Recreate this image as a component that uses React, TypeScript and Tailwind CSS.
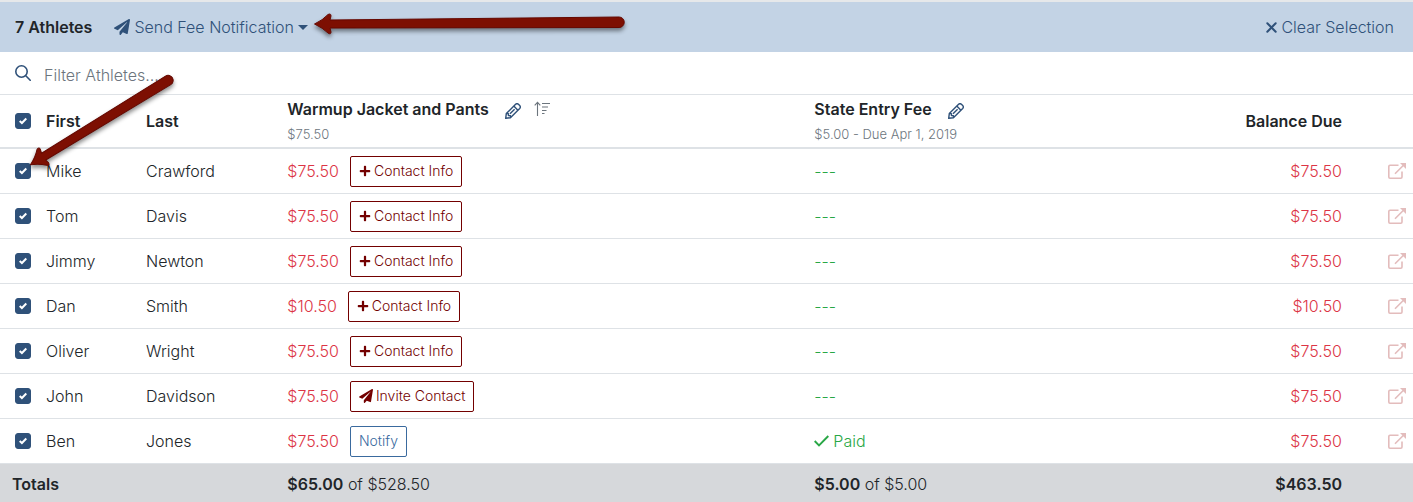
import { useState } from "react";
import { FaPaperPlane, FaPlus } from "react-icons/fa";

type ContactAction = "add" | "invite" | "notify";

interface Athlete {
  first: string;
  last: string;
  jacket: string;
  action: ContactAction;
  entryPaid: boolean;
  balance: string;
}

const ATHLETES: Athlete[] = [
  { first: "Mike", last: "Crawford", jacket: "$75.50", action: "add", entryPaid: false, balance: "$75.50" },
  { first: "Tom", last: "Davis", jacket: "$75.50", action: "add", entryPaid: false, balance: "$75.50" },
  { first: "Jimmy", last: "Newton", jacket: "$75.50", action: "add", entryPaid: false, balance: "$75.50" },
  { first: "Dan", last: "Smith", jacket: "$10.50", action: "add", entryPaid: false, balance: "$10.50" },
  { first: "Oliver", last: "Wright", jacket: "$75.50", action: "add", entryPaid: false, balance: "$75.50" },
  { first: "John", last: "Davidson", jacket: "$75.50", action: "invite", entryPaid: false, balance: "$75.50" },
  { first: "Ben", last: "Jones", jacket: "$75.50", action: "notify", entryPaid: true, balance: "$75.50" },
];

function SearchIcon() {
  return (
    <svg className="size-4 shrink-0 text-[#2f5179]" viewBox="0 0 16 16" fill="none" stroke="currentColor" strokeWidth="1.6" strokeLinecap="round" aria-hidden="true">
      <circle cx="6.5" cy="6.5" r="5.7" />
      <path d="M10.8 10.8 15.2 15.2" />
    </svg>
  );
}

function PencilIcon() {
  return (
    <svg className="size-4" viewBox="0 0 16 16" fill="none" stroke="currentColor" strokeWidth="1.4" strokeLinejoin="round" aria-hidden="true">
      <path d="M.7 15.3 1.3 10.6 10.6 1.3Q12 0 13.4 1.3L14.7 2.6Q16 4 14.7 5.4L5.4 14.7Z" />
      <path d="M8.8 3.1 12.9 7.2M1.3 10.6H3.4V12.6H5.4V14.7M5 10.8 9.6 6.2" />
    </svg>
  );
}

function SortIcon() {
  return (
    <svg className="h-4 w-4" viewBox="0 0 16 16" fill="none" stroke="currentColor" strokeWidth="1.1" aria-hidden="true">
      <path d="M3.5 15V1.5M.7 4.3 3.5 1.3 6.3 4.3M8 2.500H16M8 6H14M8 9.500H12.500M8 12.500H10.500" />
    </svg>
  );
}

function OpenIcon() {
  return (
    <svg className="h-4 w-[18px]" viewBox="0 0 18 16" fill="none" stroke="currentColor" strokeWidth="1.6" aria-hidden="true">
      <path d="M10.5 2.2H2Q.8 2.2.8 3.4V14Q.8 15.2 2 15.2H12.8Q14 15.2 14 14V8.5" />
      <path d="M7 10.8 16 1.8" />
      <path d="M12 0H18V6Z" fill="currentColor" stroke="none" />
    </svg>
  );
}

function CrossIcon() {
  return (
    <svg className="size-[11px]" viewBox="0 0 11 11" fill="none" stroke="currentColor" strokeWidth="2" strokeLinecap="round" aria-hidden="true">
      <path d="M1.3 1.3 9.7 9.7M9.7 1.3 1.3 9.7" />
    </svg>
  );
}

function PaidIcon() {
  return (
    <svg className="h-3 w-[15px]" viewBox="0 0 15 12" fill="none" stroke="currentColor" strokeWidth="1.9" aria-hidden="true">
      <path d="M.7 6 5 10.3 14.3 1" />
    </svg>
  );
}

function Tick({ label, checked, onChange }: { label: string; checked: boolean; onChange: () => void }) {
  return (
    <label className="grid size-4 cursor-pointer">
      <input
        type="checkbox"
        aria-label={label}
        checked={checked}
        onChange={onChange}
        className="peer col-start-1 row-start-1 size-4 cursor-pointer appearance-none rounded-[3px] border border-[#adb5bd] bg-white checked:border-[#2f5179] checked:bg-[#2f5179]"
      />
      <svg className="pointer-events-none invisible col-start-1 row-start-1 size-2 place-self-center text-white peer-checked:visible" viewBox="0 0 8 8" fill="none" stroke="currentColor" strokeWidth="2" aria-hidden="true">
        <path d="M.7 4 2.9 6 7.3 1.5" />
      </svg>
    </label>
  );
}

function ActionButton({ action }: { action: ContactAction }) {
  if (action === "notify") {
    return (
      <button type="button" className="h-[31px] rounded-xs border border-[#3a6a9e] px-2 text-sm font-light text-[#3a6a9e]">
        Notify
      </button>
    );
  }
  return (
    <button type="button" className="flex h-[31px] items-center gap-[3px] rounded-xs border border-[#730000] px-2 text-sm font-light text-[#730000]">
      {action === "add" ? <FaPlus className="size-3" /> : <FaPaperPlane className="size-3.5" />}
      {action === "add" ? "Contact Info" : "Invite Contact"}
    </button>
  );
}

function CalloutArrows() {
  return (
    <svg className="pointer-events-none absolute inset-0 size-full drop-shadow-[0_3px_2px_rgba(0,0,0,0.45)]" fill="#7d0f02" stroke="#650800" strokeLinejoin="round" aria-hidden="true">
      <path transform="translate(314 24)" d="M.5 0Q9-4 14-9.500Q17-11 17-8L16-4 305-7A5 5 0 0 1 305 3.500L16 4 17 8Q17 11 14 9Q9 4 .5 0Z" />
      <path transform="translate(30 165) rotate(-31.500)" d="M.5 0Q9-4 14-9.500Q17-11 17-8L16-4 162-5A5 5 0 0 1 162 5L16 4 17 8Q17 11 14 9Q9 4 .5 0Z" />
    </svg>
  );
}

export default function App() {
  const [selected, setSelected] = useState<boolean[]>(ATHLETES.map(() => true));
  const [filter, setFilter] = useState("");

  const count = selected.filter(Boolean).length;
  const allSelected = count === ATHLETES.length;

  const toggle = (index: number) => setSelected(selected.map((on, i) => (i === index ? !on : on)));
  const setAll = (on: boolean) => setSelected(ATHLETES.map(() => on));

  return (
    <div className="relative w-full overflow-hidden bg-white font-[Inter,sans-serif] text-base font-[350] text-[#212529]">
      {/* Selection bar */}
      <div className="flex h-[52px] items-center border-t-2 border-[#e6e8ea] bg-[#c3d3e5] pr-[19px] pl-[15px]">
        <span className="font-semibold">{count} Athletes</span>
        <button type="button" className="ml-[22px] flex items-center gap-1 text-[#2f5179]">
          <FaPaperPlane className="size-4" />
          Send Fee Notification
          <span className="border-x-[5px] border-t-[5px] border-x-transparent border-t-current" />
        </button>
        <button type="button" onClick={() => setAll(false)} className="ml-auto flex items-center gap-1 text-[#2f5179]">
          <CrossIcon />
          Clear Selection
        </button>
      </div>

      {/* Filter */}
      <label className="flex h-[43px] items-center gap-[13px] border-b border-[#dee2e6] px-[15px]">
        <SearchIcon />
        <input
          type="text"
          aria-label="Filter Athletes"
          placeholder="Filter Athletes..."
          value={filter}
          onChange={(e) => setFilter(e.target.value)}
          className="mt-1 grow outline-none placeholder:text-[#6c757d]"
        />
      </label>

      <table className="w-full table-fixed border-separate border-spacing-0 text-left">
        <colgroup>
          <col className="w-[34px]" />
          <col className="w-[100px]" />
          <col className="w-[10%]" />
          <col className="w-[37.3%]" />
          <col />
          <col className="w-[12%]" />
          <col className="w-[59px]" />
        </colgroup>
        <thead>
          <tr className="h-[54px] *:border-b-2 *:border-[#dee2e6] *:font-semibold">
            <th className="pl-[15px]">
              <Tick label="Select all athletes" checked={allSelected} onChange={() => setAll(!allSelected)} />
            </th>
            <th className="px-3">First</th>
            <th className="px-3">Last</th>
            <th className="px-3 pt-px">
              <div className="flex items-center">
                Warmup Jacket and Pants
                <button type="button" aria-label="Edit Warmup Jacket and Pants" className="mt-1 ml-4 text-[#2f5179]">
                  <PencilIcon />
                </button>
                <button type="button" aria-label="Sort by Warmup Jacket and Pants" className="ml-[13px] text-[#6c757d]">
                  <SortIcon />
                </button>
              </div>
              <div className="pt-px text-[13px] leading-6 font-light text-[#6c757d]">$75.50</div>
            </th>
            <th className="px-3 pt-px">
              <div className="flex items-center">
                State Entry Fee
                <button type="button" aria-label="Edit State Entry Fee" className="mt-1 ml-4 text-[#2f5179]">
                  <PencilIcon />
                </button>
              </div>
              <div className="pt-px text-[13px] leading-6 font-light text-[#6c757d]">$5.00 - Due Apr 1, 2019</div>
            </th>
            <th className="px-3 text-right">Balance Due</th>
            <th />
          </tr>
        </thead>
        <tbody>
          {ATHLETES.map((athlete, i) =>
            `${athlete.first} ${athlete.last}`.toLowerCase().includes(filter.toLowerCase()) ? (
              <tr key={athlete.last} className="h-[45px] *:border-b *:border-[#dee2e6]">
                <td className="pl-[15px]">
                  <Tick label={`Select ${athlete.first} ${athlete.last}`} checked={selected[i]} onChange={() => toggle(i)} />
                </td>
                <td className="px-3">{athlete.first}</td>
                <td className="px-3">{athlete.last}</td>
                <td className="px-3">
                  <div className="flex items-center gap-[11px]">
                    <span className="text-[#dc3545]">{athlete.jacket}</span>
                    <ActionButton action={athlete.action} />
                  </div>
                </td>
                <td className="px-3 text-[#28a745]">
                  {athlete.entryPaid ? (
                    <span className="flex items-center gap-1">
                      <PaidIcon />
                      Paid
                    </span>
                  ) : (
                    "---"
                  )}
                </td>
                <td className="px-3 text-right text-[#dc3545]">{athlete.balance}</td>
                <td className="pr-[7px]">
                  <a href="#" aria-label={`Open ${athlete.first} ${athlete.last}`} className="flex justify-end text-[#e3bcbc]">
                    <OpenIcon />
                  </a>
                </td>
              </tr>
            ) : null,
          )}
        </tbody>
        <tfoot>
          <tr className="h-10 bg-[#d6d8db]">
            <th colSpan={3} className="px-3 font-semibold">
              Totals
            </th>
            <td className="px-3">
              <b className="font-semibold">$65.00</b> of $528.50
            </td>
            <td className="px-3">
              <b className="font-semibold">$5.00</b> of $5.00
            </td>
            <td className="px-3 text-right font-semibold">$463.50</td>
            <td />
          </tr>
        </tfoot>
      </table>

      <CalloutArrows />
    </div>
  );
}
